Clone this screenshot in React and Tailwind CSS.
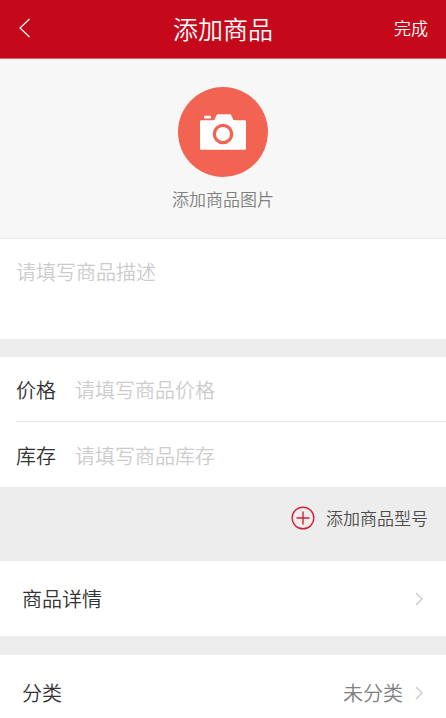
function ChevronRight() {
  return (
    <svg className="w-2 h-[14px] shrink-0" viewBox="0 0 8 14" fill="none" stroke="#c8c8c8" strokeWidth="1.3" aria-hidden="true">
      <path d="M1 1l6 6-6 6" />
    </svg>
  );
}

function CameraIcon() {
  return (
    <svg className="w-[46px] h-9" viewBox="0 0 46 36" fill="#fff" aria-hidden="true">
      <rect x="4" y="1.8" width="7" height="2.8" rx="0.6" />
      <path
        fillRule="evenodd"
        d="M1.5 6.2H13c1.2 0 1.7-.6 2.1-1.6l1-2.7C16.5.7 17.2.2 18.3.2h11.2c1.1 0 1.8.5 2.2 1.7l1 2.7c.4 1 .9 1.6 2.1 1.6h9.7c1 0 1.5.5 1.5 1.5v26.6c0 1-.5 1.5-1.5 1.5h-43c-1 0-1.5-.5-1.5-1.5V7.7c0-1 .5-1.5 1.5-1.5zM23 9.7a10.3 10.3 0 1 0 0 20.6 10.3 10.3 0 0 0 0-20.6z"
      />
      <circle cx="23" cy="20" r="7" />
    </svg>
  );
}

function PlusCircle() {
  return (
    <svg className="w-6 h-6" viewBox="0 0 24 24" fill="none" stroke="#d0213a" strokeWidth="1.4" aria-hidden="true">
      <circle cx="12" cy="12" r="10.8" />
      <path d="M12 5.5v13M5.5 12h13" />
    </svg>
  );
}

function Field({ id, label, placeholder }) {
  return (
    <div className="flex items-center h-[65px] pt-[2px]">
      <label htmlFor={id} className="w-[59px] shrink-0 text-[#333]">
        {label}
      </label>
      <input
        id={id}
        type="text"
        placeholder={placeholder}
        className="flex-1 min-w-0 bg-transparent outline-none placeholder:text-[#cccccc]"
      />
    </div>
  );
}

function LinkRow({ label, value }) {
  return (
    <button type="button" className="flex items-center w-full h-[75px] pl-[22px] pr-[23px] bg-white text-left text-[#333]">
      <span className="flex-1">{label}</span>
      {value && <span className="mr-3 text-[#808080]">{value}</span>}
      <ChevronRight />
    </button>
  );
}

export default function App() {
  return (
    <div className="h-screen overflow-hidden bg-[#ededed] text-[20px] leading-7 font-[350] font-['Noto_Sans_CJK_SC',sans-serif]">
      <header className="grid grid-cols-[1fr_auto_1fr] items-center h-[59px] px-[18px] pb-[3px] bg-[#c5091b] border-b border-[#dc6b76] text-white">
        <button type="button" aria-label="返回" className="justify-self-start">
          <svg className="w-3 h-5" viewBox="0 0 12 20" fill="none" stroke="currentColor" strokeWidth="1.2" aria-hidden="true">
            <path d="M11.5 1L2 10l9.5 9" />
          </svg>
        </button>
        <h1 className="text-[25px] leading-7 font-[350]">添加商品</h1>
        <button type="button" className="justify-self-end text-[17px]">
          完成
        </button>
      </header>

      <section className="flex flex-col items-center h-[180px] pt-7 bg-[#f7f7f7] border-b border-[#ececec]">
        <button type="button" className="flex flex-col items-center gap-2 text-[17px] text-[#808080]">
          <span className="flex items-center justify-center w-[90px] h-[90px] rounded-full bg-[#f26352]">
            <CameraIcon />
          </span>
          添加商品图片
        </button>
      </section>

      <textarea
        aria-label="商品描述"
        placeholder="请填写商品描述"
        className="block w-full h-[100px] px-4 pt-[19px] bg-white resize-none outline-none placeholder:text-[#cccccc]"
      />

      <section className="mt-[18px] pl-4 bg-white divide-y divide-[#e6e6e6]">
        <Field id="price" label="价格" placeholder="请填写商品价格" />
        <Field id="stock" label="库存" placeholder="请填写商品库存" />
      </section>

      <div className="flex justify-end h-[74px] pt-[17px] pr-[18px]">
        <button type="button" className="flex items-center gap-[11px] h-7 text-[17px] text-[#4d4d4d]">
          <PlusCircle />
          添加商品型号
        </button>
      </div>

      <div className="flex flex-col gap-[19px]">
        <LinkRow label="商品详情" />
        <LinkRow label="分类" value="未分类" />
      </div>
    </div>
  );
}
